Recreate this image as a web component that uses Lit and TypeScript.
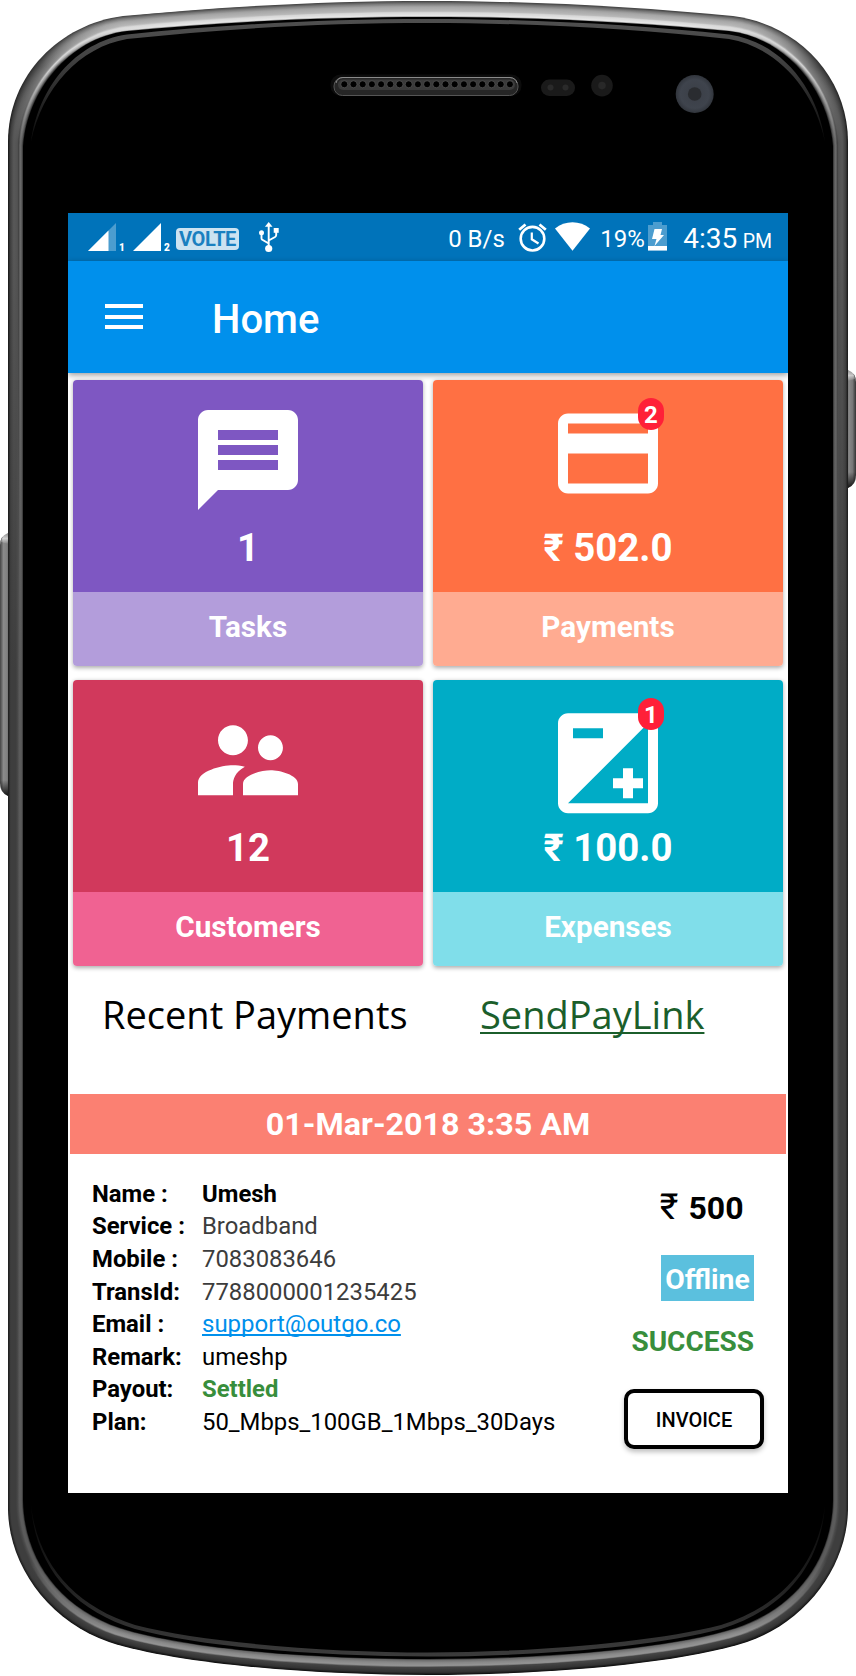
import { LitElement, html, svg, css } from "lit";
import { customElement, property } from "lit/decorators.js";

const mix = (a: number[], b: number[], t: number) => a.map((v, i) => v + (b[i] - v) * t);

// Half outlines (left side), top and bottom, each as a start point and two cubic segments.
const OUT_TOP = [8, 142, 8, 75, 60, 24, 123, 16, 220, 7, 320, 1, 428, 1];
const IN_TOP = [23, 146, 27, 92, 68, 38, 127, 31, 220, 22, 320, 17, 428, 17];
const OUT_BOT = [8, 1510, 9, 1565, 48, 1621, 109, 1642, 180, 1665, 320, 1675, 428, 1675];
const IN_BOT = [23, 1500, 24, 1558, 58, 1607, 120, 1628, 190, 1650, 320, 1659, 428, 1659];

function outline(t: number) {
  const a = mix(OUT_TOP, IN_TOP, t);
  const b = mix(OUT_BOT, IN_BOT, t);
  const flip = (p: number[]) => {
    const pts: string[] = [];
    for (let i = 0; i < p.length; i += 2) pts.push(`${856 - p[i]} ${p[i + 1]}`);
    return pts.reverse();
  };
  const ra = flip(a);
  const pb: string[] = [];
  for (let i = 0; i < b.length; i += 2) pb.push(`${856 - b[i]} ${b[i + 1]}`);
  const lb: string[] = [];
  for (let i = 0; i < b.length; i += 2) lb.push(`${b[i]} ${b[i + 1]}`);
  lb.reverse();
  return (
    `M${a[0]} ${a[1]}C${a.slice(2, 8).join(" ")}C${a.slice(8).join(" ")}` +
    `C${ra.slice(1, 4).join(" ")}C${ra.slice(4, 7).join(" ")}` +
    `L${pb[0]}C${pb.slice(1, 4).join(" ")}C${pb.slice(4, 7).join(" ")}` +
    `C${lb.slice(1, 4).join(" ")}C${lb.slice(4, 7).join(" ")}Z`
  );
}

function ramp(stops: [number, number][], t: number) {
  for (let i = 1; i < stops.length; i++) {
    if (t <= stops[i][0]) {
      const [t0, v0] = stops[i - 1];
      const [t1, v1] = stops[i];
      return Math.round(v0 + ((v1 - v0) * (t - t0)) / (t1 - t0));
    }
  }
  return stops[stops.length - 1][1];
}
const grey = (v: number) => `rgb(${v},${v},${v})`;

const TOP: [number, number][] = [[0, 70], [0.15, 120], [0.35, 165], [0.62, 185], [0.7, 215], [0.92, 232], [1, 90]];
const CORNER: [number, number][] = [[0, 50], [0.25, 85], [0.6, 125], [0.66, 130], [0.75, 215], [0.85, 160], [1, 10]];
const SIDE: [number, number][] = [[0, 25], [0.12, 60], [0.35, 88], [0.62, 82], [0.68, 60], [0.78, 110], [0.9, 90], [1, 25]];
const LOW: [number, number][] = [[0, 30], [0.15, 62], [0.5, 62], [0.62, 72], [0.75, 92], [0.9, 90], [1, 25]];
const BOTTOM: [number, number][] = [[0, 15], [0.15, 50], [0.35, 62], [0.46, 70], [0.55, 150], [0.75, 135], [0.92, 105], [1, 10]];

@customElement("phone-bezel")
class PhoneBezel extends LitElement {
  static styles = css`
    :host { display: block; }
    svg { display: block; }
  `;
  render() {
    const n = 24;
    const steps = Array.from({ length: n }, (_, i) => i / n);
    return html`<svg width="856" height="1676" viewBox="0 0 856 1676" aria-hidden="true">
      <defs>
        <linearGradient id="bl" x1="0" x2="1" y1="0" y2="0">
          <stop offset="0" stop-color="#444" /><stop offset=".35" stop-color="#8a8a8a" />
          <stop offset=".7" stop-color="#808080" /><stop offset="1" stop-color="#555" />
        </linearGradient>
        <linearGradient id="br" x1="1" x2="0" y1="0" y2="0">
          <stop offset="0" stop-color="#333" /><stop offset=".35" stop-color="#777" />
          <stop offset=".7" stop-color="#888" /><stop offset="1" stop-color="#555" />
        </linearGradient>
        <linearGradient id="cap" x1="0" x2="0" y1="0" y2="1">
          <stop offset="0" stop-color="#fff" stop-opacity=".1" /><stop offset=".5" stop-color="#fff" stop-opacity=".6" />
          <stop offset="1" stop-color="#fff" stop-opacity="0" />
        </linearGradient>
        <linearGradient id="foot" x1="0" x2="0" y1="0" y2="1">
          <stop offset="0" stop-color="#000" stop-opacity="0" /><stop offset="1" stop-color="#000" stop-opacity=".85" />
        </linearGradient>
        <linearGradient id="rt" gradientUnits="userSpaceOnUse" x1="0" x2="0" y1="18" y2="142">
          <stop offset="0" stop-color="#505050" /><stop offset=".3" stop-color="#444" /><stop offset="1" stop-color="#0a0a0a" />
        </linearGradient>
        <linearGradient id="rb" gradientUnits="userSpaceOnUse" x1="0" x2="0" y1="1505" y2="1657">
          <stop offset="0" stop-color="#060606" /><stop offset=".7" stop-color="#2a2a2a" /><stop offset="1" stop-color="#3c3c3c" />
        </linearGradient>
        <radialGradient id="lens">
          <stop offset="0" stop-color="#3a3e46" /><stop offset=".75" stop-color="#3f444d" /><stop offset="1" stop-color="#31353c" />
        </radialGradient>
        ${steps.map(
          (t, i) => svg`<linearGradient id=${"g" + i} gradientUnits="userSpaceOnUse" x1="0" x2="0" y1="0" y2="1676">
            <stop offset="0" stop-color=${grey(ramp(TOP, t))} />
            <stop offset=".015" stop-color=${grey(ramp(TOP, t))} />
            <stop offset=".04" stop-color=${grey(ramp(CORNER, t))} />
            <stop offset=".085" stop-color=${grey(ramp(SIDE, t))} />
            <stop offset=".15" stop-color=${grey(ramp(SIDE, t))} />
            <stop offset=".4" stop-color=${grey(ramp(LOW, t))} />
            <stop offset=".93" stop-color=${grey(ramp(LOW, t))} />
            <stop offset=".975" stop-color=${grey(ramp(BOTTOM, t))} />
            <stop offset="1" stop-color=${grey(ramp(BOTTOM, t))} />
          </linearGradient>`
        )}
      </defs>
      <path d="M10 533H8Q0 536 0 545V783Q0 793 8 796H10Z" fill="url(#bl)" />
      <path d="M8 533Q2 535 1 542L8 544Z" fill="url(#cap)" />
      <path d="M0 780Q0 793 8 796V780Z" fill="url(#foot)" />
      <path d="M846 370H848Q856 373 856 382V475Q856 485 848 488H846Z" fill="url(#br)" />
      <path d="M848 370Q854 372 855 379L848 381Z" fill="url(#cap)" />
      <path d="M856 472Q856 485 848 488V472Z" fill="url(#foot)" />
      ${steps.map((t, i) => svg`<path d=${outline(t)} fill=${`url(#g${i})`} />`)}
      <path d=${outline(1)} fill="#000" />
      <path
        d="M31 142C38 88 75 42 127 34.500C220 25 320 19 428 19C536 19 636 25 729 34.500C781 42 818 88 825 142C814 88 776 47 729 39C636 29 536 23 428 23C320 23 220 29 127 39C80 47 42 88 31 142Z"
        fill="url(#rt)"
      />
      <path
        d="M31 1505C35 1565 72 1610 135 1629C205 1648 330 1656.500 428 1656.500C526 1656.500 651 1648 721 1629C784 1610 821 1565 825 1505C818 1565 781 1606 721 1625C651 1643 526 1652.500 428 1652.500C330 1652.500 205 1643 135 1625C75 1606 38 1565 31 1505Z"
        fill="url(#rb)"
      />
      <rect x="330.500" y="74.500" width="191" height="21.500" rx="10" fill="#0c0c0c" />
      <rect x="334" y="77.500" width="184" height="18" rx="8.500" fill="#262626" stroke="#555" />
      <path d="M336 83Q337.500 77.500 343 77.500H510Q516 78 517 83" fill="none" stroke="#8a8a8a" />
      <rect x="338" y="79.500" width="177" height="10.500" rx="5" fill="#3a3a3a" />
      ${Array.from(
        { length: 19 },
        (_, i) => svg`<circle cx=${344.3 + i * 9.2} cy="84.300" r="3.500" fill="#000" stroke="#666" stroke-width=".6" />`
      )}
      <rect x="541" y="79.500" width="34" height="16.500" rx="8.250" fill="#1a1a1a" />
      <circle cx="550.500" cy="87.600" r="3" fill="#2a2a2a" />
      <circle cx="565.500" cy="87.600" r="3" fill="#2a2a2a" />
      <circle cx="602" cy="85.600" r="10.800" fill="#1a1a1a" />
      <circle cx="602" cy="85.600" r="3.800" fill="#282828" />
      <circle cx="694.700" cy="94" r="19" fill="url(#lens)" />
      <circle cx="694.700" cy="94" r="6.800" fill="#2a2c30" />
    </svg>`;
  }
}

@customElement("status-bar")
class StatusBar extends LitElement {
  static styles = css`
    :host {
      display: flex;
      justify-content: space-between;
      height: 48px;
      background: #0073ba;
      color: #fff;
      padding: 0 16px 0 20px;
    }
    .side { display: flex; align-items: flex-start; }
    svg { display: block; overflow: visible; }
    .sig { margin-top: 10px; width: 28px; height: 28px; }
    .sim { font-size: 10px; font-weight: 900; line-height: 12px; margin: 28.500px 0 0 3px; width: 14px; }
    .volte {
      box-sizing: border-box;
      width: 63px; height: 22px; margin: 15px 0 0 -2px;
      background: #cce3f1; color: #1a80c0; border-radius: 4px;
      font-size: 20px; font-weight: 700; line-height: 23px; text-align: center; letter-spacing: -0.4px;
    }
    .usb { margin: 9px 0 0 20px; }
    .t { font-size: 24px; line-height: 28px; margin-top: 11.500px; white-space: nowrap; }
    .rate { width: 69.500px; }
    .alarm { margin-top: 9px; }
    .wifi { margin: 9px 0 0 8px; }
    .pct { width: 48px; margin-left: 10.500px; }
    .bat { margin-top: 9px; }
    .clock { display: flex; align-items: baseline; gap: 5.500px; font-size: 28px; line-height: 34px; margin: 8.500px 0 0 16px; white-space: nowrap; }
    .pm { font-size: 19.500px; }
  `;
  render() {
    return html`
      <div class="side">
        <svg class="sig" viewBox="0 0 28 28"><path d="M28 0V28H0Z" fill="#4c9dcf" /><path d="M20.500 7.500V28H0Z" fill="#fff" /></svg>
        <span class="sim">1</span>
        <svg class="sig" viewBox="0 0 28 28"><path d="M28 0V28H0Z" fill="#fff" /></svg>
        <span class="sim">2</span>
        <span class="volte">VOLTE</span>
        <svg class="usb" width="20" height="30" viewBox="0 0 20 30">
          <path d="M9.700 26V4M9.700 21.500L3 17.500Q2.500 17 2.500 16V11M9.700 18.500L16 15Q17.200 14.200 17.200 13V8" fill="none" stroke="#fff" stroke-width="1.900" />
          <path d="M9.700 0L13.500 4.800H5.900Z" fill="#fff" />
          <circle cx="2.500" cy="10.800" r="2.500" fill="#fff" />
          <circle cx="9.700" cy="26.500" r="3.600" fill="#fff" />
          <path d="M14.700 6H19.700V10.800H14.700Z" fill="#fff" />
        </svg>
      </div>
      <div class="side">
        <span class="t rate">0 B/s</span>
        <svg class="alarm" width="29" height="30" viewBox="0 0 29 30">
          <circle cx="14.500" cy="16.700" r="11.800" fill="none" stroke="#fff" stroke-width="2.600" />
          <path d="M1.200 7.800L7.500 2.500M27.800 7.800L21.500 2.500" stroke="#fff" stroke-width="2.800" />
          <path d="M13.800 10.500V17.300L20.500 21.500" fill="none" stroke="#fff" stroke-width="2.200" />
        </svg>
        <svg class="wifi" width="35" height="30" viewBox="0 0 35 30">
          <path d="M0 6.500C10-1.700 25-1.700 35 6.500L17.500 28.800Z" fill="#fff" />
        </svg>
        <span class="t pct">19%</span>
        <svg class="bat" width="19" height="29" viewBox="0 0 19 29">
          <path d="M5 0H14V3H19V28.500H0V3H5Z" fill="#4c9dcf" />
          <path d="M0 24H19V28.500H0Z" fill="#fff" />
          <path d="M6.500 7H14L12.500 13H16L6.500 24L8.500 17H4Z" fill="#fff" />
        </svg>
        <span class="clock"><span>4:35</span><span class="pm">PM</span></span>
      </div>
    `;
  }
}

@customElement("stat-card")
class StatCard extends LitElement {
  @property() path = "";
  @property() box = "";
  @property() value = "";
  @property() label = "";
  @property() tone = "";
  @property() badge = "";
  static styles = css`
    :host { display: block; }
    .card {
      height: 286px; border-radius: 4px; overflow: hidden; text-align: center;
      color: #fff; font-weight: 700; box-shadow: 0 1.500px 4px rgba(0, 0, 0, 0.32);
    }
    .body { height: 211.500px; box-sizing: border-box; padding-top: 30.300px; }
    .icon { position: relative; width: 100px; height: 100px; margin: 0 auto; }
    svg { display: block; overflow: visible; }
    .num { font-size: 38.400px; line-height: 44px; margin-top: 16.200px; }
    .label { height: 75px; font-size: 29.700px; line-height: 69.500px; }
    .badge {
      position: absolute; left: 80px; top: -12.500px; width: 26px; height: 32.500px;
      border-radius: 13px; background: #ff2038; font-size: 24px; line-height: 35px;
    }
    .purple .body { background: #7e57c2; } .purple .label { background: #b39ddb; }
    .orange .body { background: #ff7043; } .orange .label { background: #ffab91; }
    .crimson .body { background: #d1395c; } .crimson .label { background: #f06292; }
    .teal .body { background: #00acc6; } .teal .label { background: #80deea; }
  `;
  render() {
    return html`<div class="card ${this.tone}">
      <div class="body">
        <div class="icon">
          <svg width="100" height="100" viewBox=${this.box}><path d=${this.path} fill="#fff" fill-rule="evenodd" /></svg>
          ${this.badge ? html`<span class="badge">${this.badge}</span>` : ""}
        </div>
        <div class="num">${this.value}</div>
      </div>
      <div class="label">${this.label}</div>
    </div>`;
  }
}

const CARDS = [
  {
    tone: "purple", value: "1", label: "Tasks", badge: "", box: "2 2 20 20",
    path: "M20 2H4C2.900 2 2 2.900 2 4V22L6 18H20C21.100 18 22 17.100 22 16V4C22 2.900 21.100 2 20 2ZM18 14H6V12H18ZM18 11H6V9H18ZM18 8H6V6H18Z",
  },
  {
    tone: "orange", value: "₹ 502.0", label: "Payments", badge: "2", box: "2 3.3 20 20",
    path: "M20 4H4C2.890 4 2 4.890 2 6V18C2 19.110 2.890 20 4 20H20C21.110 20 22 19.110 22 18V6C22 4.890 21.110 4 20 4ZM20 18H4V12H20ZM20 8H4V6H20Z",
  },
  {
    tone: "crimson", value: "12", label: "Customers", badge: "", box: "2 1.95 20 20",
    path: "M16.500 12c1.380 0 2.490-1.120 2.490-2.500S17.880 7 16.500 7C15.120 7 14 8.120 14 9.500s1.120 2.500 2.500 2.500zM9 11c1.660 0 2.990-1.340 2.990-3S10.660 5 9 5C7.340 5 6 6.340 6 8s1.340 3 3 3zm7.500 3c-1.830 0-5.500.920-5.500 2.750V19h11v-2.250c0-1.830-3.670-2.750-5.500-2.750zM9 13c-2.330 0-7 1.170-7 3.500V19h7v-2.250c0-.850.330-2.340 2.370-3.470C10.500 13.100 9.660 13 9 13z",
  },
  {
    tone: "teal", value: "₹ 100.0", label: "Expenses", badge: "1", box: "2 1.33 20 20",
    path: "M20 2H4C2.900 2 2 2.900 2 4V20C2 21.100 2.900 22 4 22H20C21.100 22 22 21.100 22 20V4C22 2.900 21.100 2 20 2ZM5 5H11V7H5ZM20 20H4L20 4ZM15 17V19H17V17H19V15H17V13H15V15H13V17Z",
  },
];

const DETAILS = [
  ["Name :", "Umesh", "strong"],
  ["Service :", "Broadband", "muted"],
  ["Mobile :", "7083083646", "muted"],
  ["TransId:", "7788000001235425", "muted"],
  ["Email :", "support@outgo.co", "mail"],
  ["Remark:", "umeshp", ""],
  ["Payout:", "Settled", "ok"],
  ["Plan:", "50_Mbps_100GB_1Mbps_30Days", ""],
];

@customElement("app-root")
class AppRoot extends LitElement {
  static styles = css`
    :host {
      display: grid; width: 856px; height: 1676px; background: #fff;
      font-family: Roboto, "Noto Sans", sans-serif; color: #000; overflow: hidden;
    }
    phone-bezel, .screen { grid-area: 1 / 1; }
    .screen {
      z-index: 1; width: 720px; height: 1280px; margin: 213px 0 0 68px;
      background: #fff; display: flex; flex-direction: column; overflow: hidden;
    }
    .bar {
      height: 112px; box-sizing: border-box; background: #0090ec; color: #fff; flex: none;
      display: flex; align-items: flex-start; padding: 42px 0 0 37px; gap: 69px;
      box-shadow: 0 2px 6px rgba(0, 0, 0, 0.4);
    }
    status-bar { flex: none; }
    .burger { display: flex; flex-direction: column; gap: 6.500px; padding-top: 1px; width: 38px; }
    .burger i { height: 4px; background: #fff; }
    .title { font-size: 40px; font-weight: 500; line-height: 48px; margin-top: -7px; }
    .cards { display: grid; grid-template-columns: 350px 350px; gap: 14px 10px; padding: 7px 5px 0; }
    .heads { display: flex; font-family: "Open Sans", "Noto Sans", sans-serif; font-size: 38px; line-height: 50px; height: 50px; margin-top: 23px; padding-left: 34px; white-space: nowrap; }
    .recent { width: 378px; }
    .link { color: #1b5e2b; text-decoration: underline; text-decoration-thickness: 2px; text-underline-offset: 3px; text-decoration-skip-ink: none; }
    .date { height: 59.500px; margin: 55px 2px 0; background: #fb8072; color: #fff; font-weight: 700; font-size: 32.250px; line-height: 61.500px; text-align: center; flex: none; }
    .payment { display: flex; justify-content: space-between; padding: 23.500px 24px 0; }
    .rows { display: grid; grid-template-columns: 110px auto; grid-auto-rows: 32.640px; align-content: start; font-size: 23.870px; line-height: 33px; white-space: nowrap; padding-top: 0.7px; }
    .k, .strong, .ok { font-weight: 700; }
    .muted { color: #3c3c3c; }
    .mail { color: #0090ec; font-size: 24px; text-decoration: underline; text-decoration-thickness: 2px; text-underline-offset: 2px; text-decoration-skip-ink: none; }
    .ok { color: #388e3c; }
    .right { display: flex; flex-direction: column; align-items: flex-end; }
    .amount { font-size: 32px; font-weight: 700; line-height: 44px; height: 44px; margin: 8px 20.500px 0 0; white-space: nowrap; }
    .rs { font-size: 36px; font-weight: 400; margin-right: 2px; }
    .mode { background: #5bc0de; color: #fff; font-weight: 700; font-size: 28.300px; width: 93px; height: 46px; line-height: 49px; text-align: center; margin: 26px 10px 0 0; }
    .state { font-size: 28px; font-weight: 700; color: #388e3c; line-height: 34px; margin: 24px 10px 0 0; }
    .invoice {
      box-sizing: border-box; width: 140px; height: 60px; border: 4px solid #000; border-radius: 10px; background: #fff;
      margin-top: 30px; font-size: 20px; font-weight: 500; line-height: 54px; text-align: center; box-shadow: 0 3px 5px rgba(0, 0, 0, 0.25);
    }
  `;
  render() {
    return html`
      <phone-bezel></phone-bezel>
      <main class="screen">
        <status-bar></status-bar>
        <header class="bar">
          <div class="burger"><i></i><i></i><i></i></div>
          <div class="title">Home</div>
        </header>
        <section class="cards">
          ${CARDS.map(
            (c) => html`<stat-card .tone=${c.tone} .value=${c.value} .label=${c.label} .badge=${c.badge} .box=${c.box} .path=${c.path}></stat-card>`
          )}
        </section>
        <div class="heads"><span class="recent">Recent Payments</span><span class="link">SendPayLink</span></div>
        <div class="date">01-Mar-2018 3:35 AM</div>
        <section class="payment">
          <div class="rows">
            ${DETAILS.map(([k, v, c]) => html`<span class="k">${k}</span><span><span class=${c}>${v}</span></span>`)}
          </div>
          <div class="right">
            <div class="amount"><span class="rs">₹</span> 500</div>
            <div class="mode">Offline</div>
            <div class="state">SUCCESS</div>
            <div class="invoice">INVOICE</div>
          </div>
        </section>
      </main>
    `;
  }
}
